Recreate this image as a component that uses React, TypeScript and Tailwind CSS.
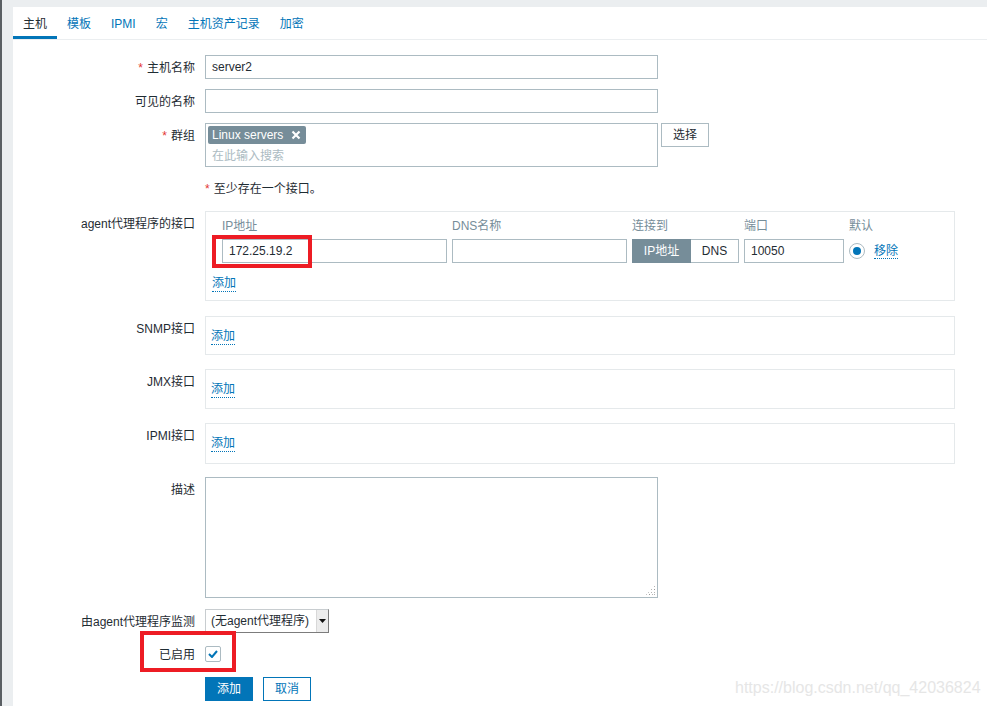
import React from "react";

const tabs = ["主机", "模板", "IPMI", "宏", "主机资产记录", "加密"];

const font = "font-['Liberation_Sans','Noto_Sans_CJK_SC',sans-serif]";

const Label = ({ text, required }: { text: string; required?: boolean }) => (
  <div className="w-[182px] mr-[10px] shrink-0 pt-[6px] text-right leading-[14px] text-[#1f2c33]">
    {required && <span className="text-[#e33734] mr-[4px]">*</span>}
    {text}
  </div>
);

const AddLink = () => (
  <span className="text-[#0275b8] leading-[14px] border-b border-dotted border-[#0275b8] pb-[1px]">
    添加
  </span>
);

const Input = ({ value, w }: { value?: string; w: string }) => (
  <div
    className={`${w} h-[24px] border border-[#acbbc2] bg-white px-[6px] flex items-center text-[#1f2c33]`}
  >
    {value}
  </div>
);

const EmptyBox = ({ h }: { h: string }) => (
  <div className={`w-[750px] ${h} border border-[#e5e9eb] pl-[5px] pt-[10px]`}>
    <AddLink />
  </div>
);

const App = () => {
  return (
    <div className={`relative w-[987px] h-[706px] overflow-hidden bg-[#ebeef0] flex text-[12px] ${font}`}>
      <div className="w-[2px] bg-[#5a5f63]" />
      <div className="flex-1 pl-[11px] pt-[7px]">
        <div className="bg-white h-full">
          {/* tabs */}
          <div className="flex border-b border-[#ebeef0] h-[33px]">
            {tabs.map((t, i) => (
              <div
                key={t}
                className={
                  i === 0
                    ? "px-[10px] pt-[10px] leading-[14px] text-[#1f2c33] border-b-[3px] border-[#0275b8]"
                    : "px-[10px] pt-[10px] leading-[14px] text-[#0275b8]"
                }
              >
                {t}
              </div>
            ))}
          </div>

          {/* form */}
          <div className="flex flex-col">
            <div className="flex mt-[15px]">
              <Label text="主机名称" required />
              <Input value="server2" w="w-[453px]" />
            </div>

            <div className="flex mt-[10px]">
              <Label text="可见的名称" />
              <Input w="w-[453px]" />
            </div>

            <div className="flex mt-[10px]">
              <Label text="群组" required />
              <div className="w-[453px] h-[44px] border border-[#acbbc2] px-[2px] pt-[2px]">
                <div className="inline-flex items-center h-[18px] bg-[#768d99] text-white rounded-[2px] pl-[4px] pr-[5px] gap-[8px]">
                  <span>Linux servers</span>
                  <svg width="10" height="10" viewBox="0 0 10 10">
                    <path d="M1.5 1.5 L8.5 8.5 M8.5 1.5 L1.5 8.5" stroke="white" strokeWidth="2.2" />
                  </svg>
                </div>
                <div className="pl-[4px] pt-[5px] leading-[14px] text-[#acbbc2]">在此输入搜索</div>
              </div>
              <div className="ml-[3px] w-[48px] h-[24px] border border-[#acbbc2] flex items-center justify-center text-[#1f2c33]">
                选择
              </div>
            </div>

            <div className="flex mt-[15px]">
              <div className="w-[192px] shrink-0" />
              <div className="leading-[14px] text-[#1f2c33]">
                <span className="text-[#e33734] mr-[4px]">*</span>至少存在一个接口。
              </div>
            </div>

            <div className="flex mt-[15px]">
              <Label text="agent代理程序的接口" />
              <div className="w-[750px] h-[90px] border border-[#e5e9eb] pl-[6px] pt-[7px]">
                <div className="grid grid-cols-[5px_225px_175px_107px_100px_100px] gap-x-[5px] leading-[14px] text-[#768d99]">
                  <div />
                  <div>IP地址</div>
                  <div>DNS名称</div>
                  <div>连接到</div>
                  <div>端口</div>
                  <div>默认</div>
                </div>
                <div className="grid grid-cols-[5px_225px_175px_107px_100px_100px] gap-x-[5px] mt-[6px]">
                  <div />
                  <div className="relative">
                    <Input value="172.25.19.2" w="w-[225px]" />
                    <div className="absolute left-[-10px] top-[-4px] w-[100px] h-[33px] border-[4px] border-[#ed1c24]" />
                  </div>
                  <Input w="w-[175px]" />
                  <div className="flex h-[24px]">
                    <div className="w-[59px] bg-[#768d99] text-white flex items-center justify-center">IP地址</div>
                    <div className="flex-1 border border-l-0 border-[#acbbc2] flex items-center justify-center text-[#1f2c33]">
                      DNS
                    </div>
                  </div>
                  <Input value="10050" w="w-[100px]" />
                  <div className="flex items-center h-[24px]">
                    <div className="w-[16px] h-[16px] rounded-full border border-[#acbbc2] flex items-center justify-center">
                      <div className="w-[8px] h-[8px] rounded-full bg-[#0275b8]" />
                    </div>
                    <span className="ml-[9px] text-[#0275b8] leading-[14px] border-b border-dotted border-[#0275b8]">
                      移除
                    </span>
                  </div>
                </div>
                <div className="mt-[11px]">
                  <AddLink />
                </div>
              </div>
            </div>

            <div className="flex mt-[15px]">
              <Label text="SNMP接口" />
              <EmptyBox h="h-[39px]" />
            </div>

            <div className="flex mt-[14px]">
              <Label text="JMX接口" />
              <EmptyBox h="h-[40px]" />
            </div>

            <div className="flex mt-[14px]">
              <Label text="IPMI接口" />
              <EmptyBox h="h-[41px]" />
            </div>

            <div className="flex mt-[13px]">
              <Label text="描述" />
              <div className="relative w-[453px] h-[121px] border border-[#acbbc2]">
                <svg className="absolute right-[1px] bottom-[1px]" width="10" height="10" viewBox="0 0 10 10">
                  <rect x="8" y="0" width="1" height="1" fill="#b5b5b5" />
                  <rect x="5" y="3" width="1" height="1" fill="#b5b5b5" />
                  <rect x="8" y="3" width="1" height="1" fill="#9a9a9a" />
                  <rect x="2" y="6" width="1" height="1" fill="#c5c5c5" />
                  <rect x="5" y="6" width="1" height="1" fill="#b5b5b5" />
                  <rect x="8" y="6" width="1" height="1" fill="#b5b5b5" />
                  <rect x="0" y="8" width="1" height="1" fill="#c5c5c5" />
                  <rect x="3" y="8" width="1" height="1" fill="#9a9a9a" />
                  <rect x="6" y="8" width="1" height="1" fill="#b5b5b5" />
                  <rect x="8" y="8" width="1" height="1" fill="#b5b5b5" />
                </svg>
              </div>
            </div>

            <div className="flex mt-[11px]">
              <Label text="由agent代理程序监测" />
              <div className="w-[124px] h-[24px] flex border border-[#c8cdd0] border-r-[#7c7c7c] border-b-[#7c7c7c]">
                <div className="flex-1 pl-[5px] flex items-center text-[#1f2c33]">(无agent代理程序)</div>
                <div className="w-[12px] bg-[#ececec] border-l border-[#d8d8d8] flex items-center justify-center">
                  <svg width="7" height="4" viewBox="0 0 7 4">
                    <path d="M0 0 H7 L3.5 4 Z" fill="#111" />
                  </svg>
                </div>
              </div>
            </div>

            <div className="flex mt-[13px]">
              <div className="relative w-[182px] mr-[10px] shrink-0 text-right leading-[14px] pt-[2px] text-[#1f2c33]">
                已启用
              </div>
              <div className="relative w-[16px] h-[16px] border border-[#acbbc2] rounded-[2px] flex items-center justify-center">
                <svg width="10" height="8" viewBox="0 0 10 8">
                  <path d="M1 4 L4 7 L9 1" stroke="#0275b8" strokeWidth="2" fill="none" />
                </svg>
                <div className="absolute left-[-66px] top-[-16px] w-[96px] h-[41px] border-[4px] border-[#ed1c24]" />
              </div>
            </div>

            <div className="flex mt-[15px]">
              <div className="w-[192px] shrink-0" />
              <div className="w-[48px] h-[24px] bg-[#0275b8] text-white flex items-center justify-center">添加</div>
              <div className="ml-[10px] w-[48px] h-[24px] border border-[#0275b8] text-[#0275b8] flex items-center justify-center">
                取消
              </div>
            </div>
          </div>
        </div>
      </div>
      <div className="absolute left-[735px] top-[679px] text-[16px] leading-[18px] text-[#e6e6e6] font-['Liberation_Sans',sans-serif]">
        https://blog.csdn.net/qq_42036824
      </div>
    </div>
  );
};

export default App;
